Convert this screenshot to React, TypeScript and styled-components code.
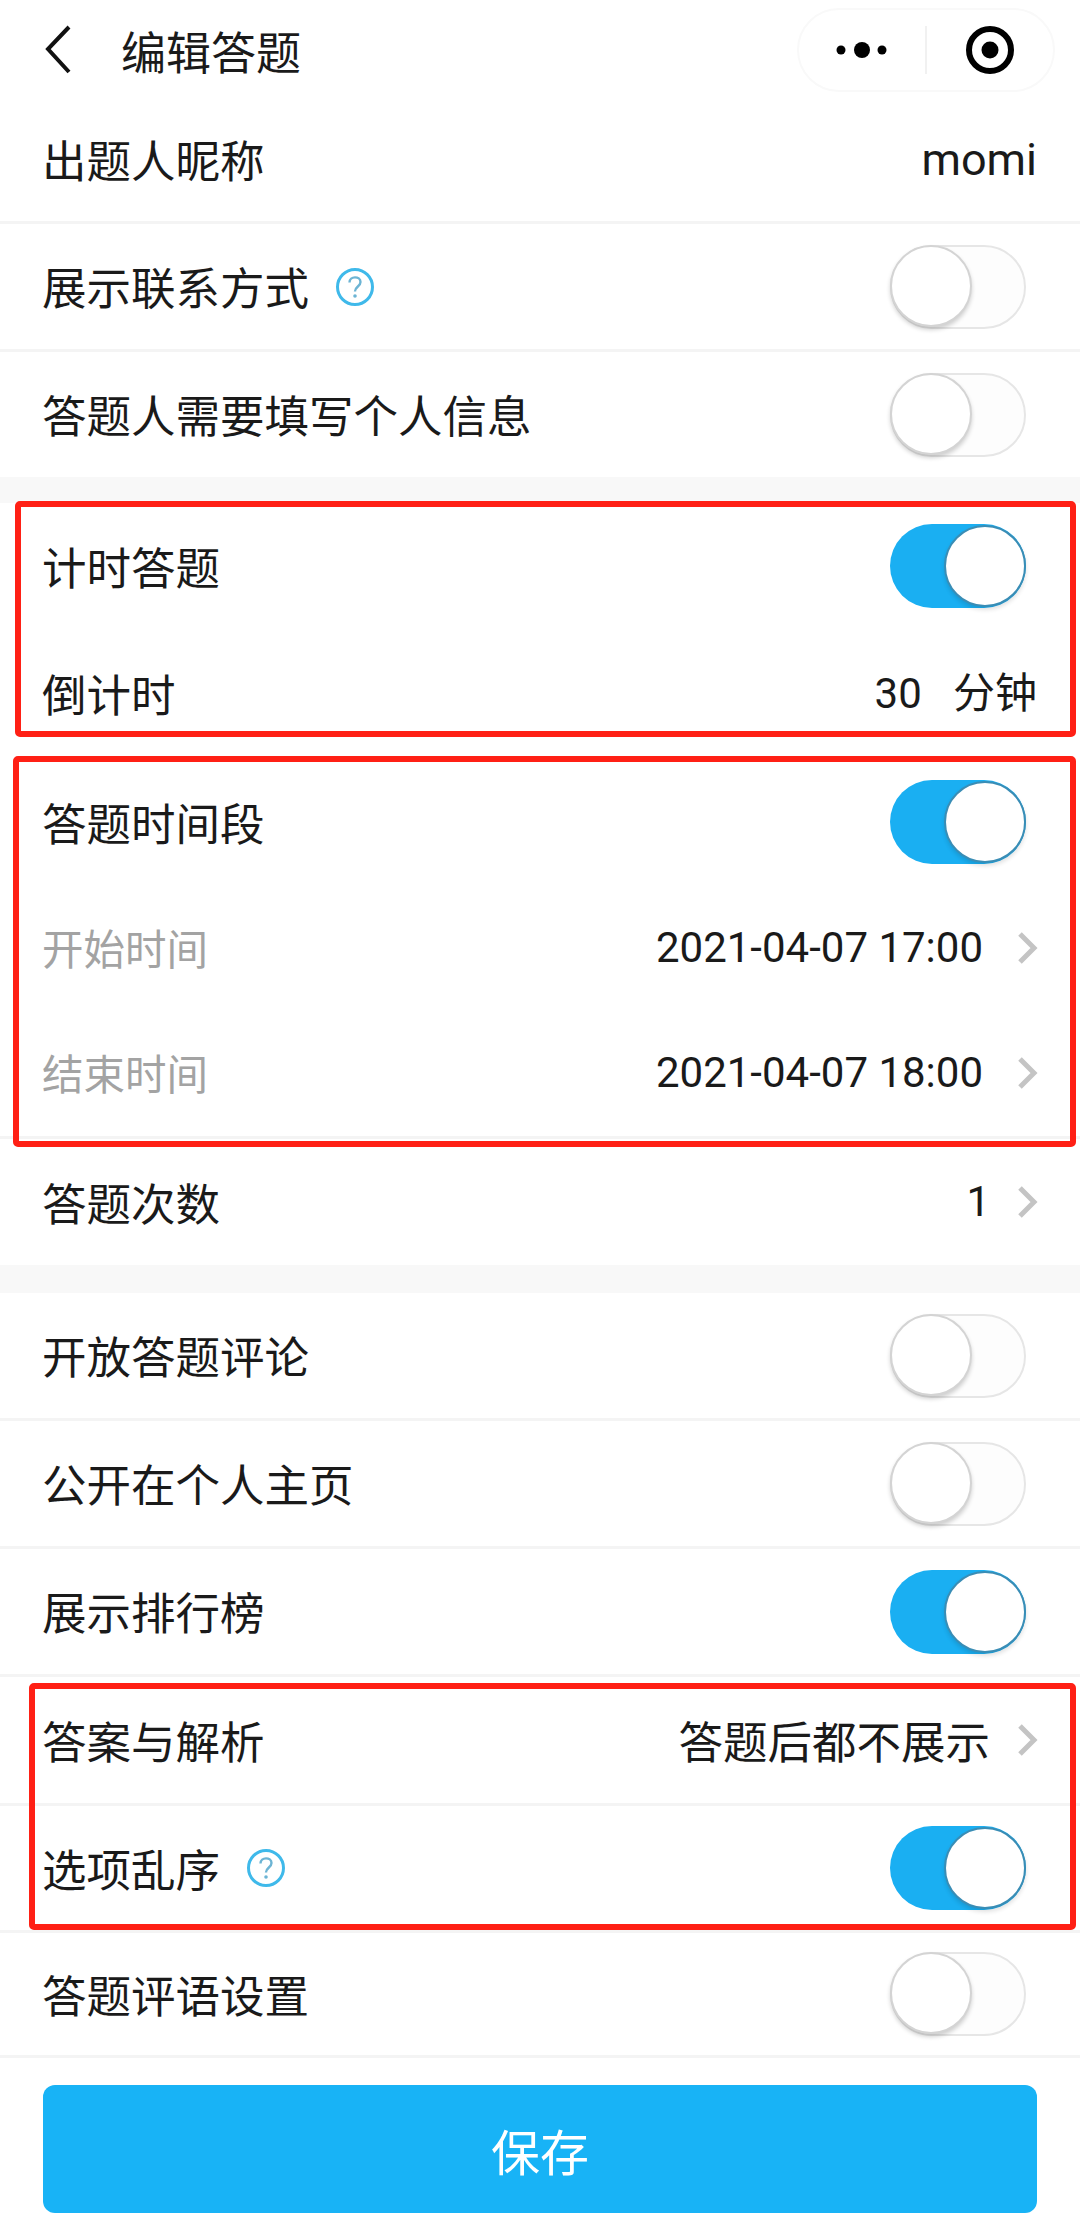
import React from 'react'
import styled, { createGlobalStyle } from 'styled-components'

const GlobalStyle = createGlobalStyle`
  html, body {
    margin: 0;
    padding: 0;
    background: #fff;
  }
  * {
    box-sizing: border-box;
  }
`

const Page = styled.div`
  width: 1080px;
  height: 2240px;
  overflow: hidden;
  background: #fff;
  color: #1a1a1a;
  font-family: Roboto, 'Noto Sans CJK SC', sans-serif;
  font-size: 44px;
  line-height: 1;
`

const Header = styled.header`
  height: 98px;
  padding: 8px 25px 6px 43px;
  display: flex;
  align-items: center;
`

const BackIcon = styled.svg`
  width: 30px;
  height: 50px;
  flex: none;
`

const Title = styled.h1`
  margin: 0 0 0 48px;
  flex: 1;
  font-size: 45px;
  font-weight: 400;
  font-family: 'Noto Sans CJK SC', sans-serif;
`

const Capsule = styled.div`
  width: 258px;
  height: 84px;
  border: 2px solid #f9f9f9;
  border-radius: 42px;
  display: flex;
  align-items: center;
`

const CapsuleHalf = styled.div`
  flex: 1;
  height: 48px;
  display: flex;
  align-items: center;
  justify-content: center;

  & + & {
    border-left: 2px solid #f1f1f1;
  }
`

const Row = styled.div<{ $h: number; $line?: boolean }>`
  height: ${p => p.$h}px;
  padding: 0 43px 0 42px;
  display: flex;
  align-items: center;
  border-bottom: ${p => (p.$line ? '3px solid #f4f4f4' : 'none')};
`

const Label = styled.div<{ $muted?: boolean }>`
  color: ${p => (p.$muted ? '#a3a3a3' : '#1a1a1a')};
  font-family: 'Noto Sans CJK SC', sans-serif;
  font-size: ${p => (p.$muted ? 41.5 : 44.5)}px;
`

const Spacer = styled.div`
  flex: 1;
`

const Value = styled.div<{ $tail?: number }>`
  font-size: 42px;
  white-space: pre;
  margin-right: ${p => p.$tail ?? 0}px;
`

const Nickname = styled.div`
  font-size: 45px;
`

const Chevron = styled.svg`
  width: 22px;
  height: 36px;
  margin-left: 27px;
  margin-right: -2px;
  flex: none;
`

const HelpIcon = styled.svg`
  width: 40px;
  height: 40px;
  margin-left: 26px;
  flex: none;
`

const Track = styled.div<{ $on: boolean }>`
  position: relative;
  width: 136px;
  height: 84px;
  margin-right: 11px;
  border-radius: 42px;
  background: ${p => (p.$on ? '#1aaff2' : '#fdfdfd')};
  border: ${p => (p.$on ? 'none' : '2px solid #e6e6e6')};
`

const Thumb = styled.div<{ $on: boolean }>`
  position: absolute;
  top: ${p => (p.$on ? '1px' : '-2px')};
  left: ${p => (p.$on ? '54px' : '-2px')};
  width: 82px;
  height: 82px;
  border-radius: 50%;
  background: #fff;
  border: 2px solid ${p => (p.$on ? '#3a8db5' : '#d4d4d4')};
  box-shadow: 0 3px 4px rgba(0, 0, 0, ${p => (p.$on ? 0.12 : 0.18)});
`

const GroupGap = styled.div<{ $h: number }>`
  height: ${p => p.$h}px;
  background: #f8f8f8;
`

const Highlighted = styled.section`
  position: relative;
`

const Frame = styled.div<{ $top: number; $bottom: number; $left: number }>`
  position: absolute;
  top: ${p => p.$top}px;
  bottom: ${p => p.$bottom}px;
  left: ${p => p.$left}px;
  right: 4px;
  border: 6px solid #ff2015;
  border-radius: 5px;
  pointer-events: none;
`

const Footer = styled.div`
  padding: 27px 43px 0;
`

const SaveButton = styled.button`
  display: block;
  width: 100%;
  height: 128px;
  border: none;
  border-radius: 12px;
  background: #18b3f6;
  color: #fff;
  font-family: 'Noto Sans CJK SC', sans-serif;
  font-size: 49px;
`

const Back = () => (
  <BackIcon viewBox="0 0 30 50" fill="none" stroke="#111" strokeWidth="4">
    <path d="M26 2 L5 24 L26 47" />
  </BackIcon>
)

const More = () => (
  <svg width="56" height="20" viewBox="0 0 56 20" fill="#000">
    <circle cx="7" cy="10" r="4.5" />
    <circle cx="28" cy="10" r="8" />
    <circle cx="48" cy="10" r="4.5" />
  </svg>
)

const Target = () => (
  <svg width="50" height="50" viewBox="0 0 50 50">
    <circle cx="25" cy="25" r="21" fill="none" stroke="#000" strokeWidth="6" />
    <circle cx="25" cy="25" r="8.5" fill="#000" />
  </svg>
)

const Arrow = () => (
  <Chevron viewBox="0 0 22 36" fill="none" stroke="#c4c4c4" strokeWidth="5">
    <path d="M3 4 L17 18 L3 32" />
  </Chevron>
)

const Help = () => (
  <HelpIcon viewBox="0 0 40 40">
    <circle cx="20" cy="20" r="17.5" fill="none" stroke="#3fb9ea" strokeWidth="3" />
    <path
      d="M14.5 15.5 C14.5 8.5 25.5 9 25.5 15 C25.5 19.5 20 19.5 20 24.5"
      fill="none"
      stroke="#6cb4d4"
      strokeWidth="2.4"
    />
    <circle cx="20" cy="29" r="1.8" fill="#6cb4d4" />
  </HelpIcon>
)

const Toggle = ({ on }: { on?: boolean }) => (
  <Track $on={!!on}>
    <Thumb $on={!!on} />
  </Track>
)

export default function App() {
  return (
    <Page>
      <GlobalStyle />
      <Header>
        <Back />
        <Title>编辑答题</Title>
        <Capsule>
          <CapsuleHalf>
            <More />
          </CapsuleHalf>
          <CapsuleHalf>
            <Target />
          </CapsuleHalf>
        </Capsule>
      </Header>

      <Row $h={126} $line>
        <Label>出题人昵称</Label>
        <Spacer />
        <Nickname>momi</Nickname>
      </Row>
      <Row $h={128} $line>
        <Label>展示联系方式</Label>
        <Help />
        <Spacer />
        <Toggle />
      </Row>
      <Row $h={125}>
        <Label>答题人需要填写个人信息</Label>
        <Spacer />
        <Toggle />
      </Row>
      <GroupGap $h={26} />

      <Highlighted>
        <Frame $top={-2} $bottom={21} $left={15} />
        <Row $h={126}>
          <Label>计时答题</Label>
          <Spacer />
          <Toggle on />
        </Row>
        <Row $h={129}>
          <Label>倒计时</Label>
          <Spacer />
          <Value>30   分钟</Value>
        </Row>
      </Highlighted>

      <Highlighted>
        <Frame $top={-2} $bottom={-8} $left={13} />
        <Row $h={128}>
          <Label>答题时间段</Label>
          <Spacer />
          <Toggle on />
        </Row>
        <Row $h={124}>
          <Label $muted>开始时间</Label>
          <Spacer />
          <Value $tail={7}>2021-04-07 17:00</Value>
          <Arrow />
        </Row>
        <Row $h={129} $line>
          <Label $muted>结束时间</Label>
          <Spacer />
          <Value $tail={7}>2021-04-07 18:00</Value>
          <Arrow />
        </Row>
      </Highlighted>

      <Row $h={126}>
        <Label>答题次数</Label>
        <Spacer />
        <Value>1</Value>
        <Arrow />
      </Row>
      <GroupGap $h={28} />

      <Row $h={128} $line>
        <Label>开放答题评论</Label>
        <Spacer />
        <Toggle />
      </Row>
      <Row $h={128} $line>
        <Label>公开在个人主页</Label>
        <Spacer />
        <Toggle />
      </Row>
      <Row $h={128} $line>
        <Label>展示排行榜</Label>
        <Spacer />
        <Toggle on />
      </Row>

      <Highlighted>
        <Frame $top={6} $bottom={3} $left={29} />
        <Row $h={129} $line>
          <Label>答案与解析</Label>
          <Spacer />
          <Label>答题后都不展示</Label>
          <Arrow />
        </Row>
        <Row $h={127} $line>
          <Label>选项乱序</Label>
          <Help />
          <Spacer />
          <Toggle on />
        </Row>
      </Highlighted>

      <Row $h={125} $line>
        <Label>答题评语设置</Label>
        <Spacer />
        <Toggle />
      </Row>

      <Footer>
        <SaveButton>保存</SaveButton>
      </Footer>
    </Page>
  )
}
